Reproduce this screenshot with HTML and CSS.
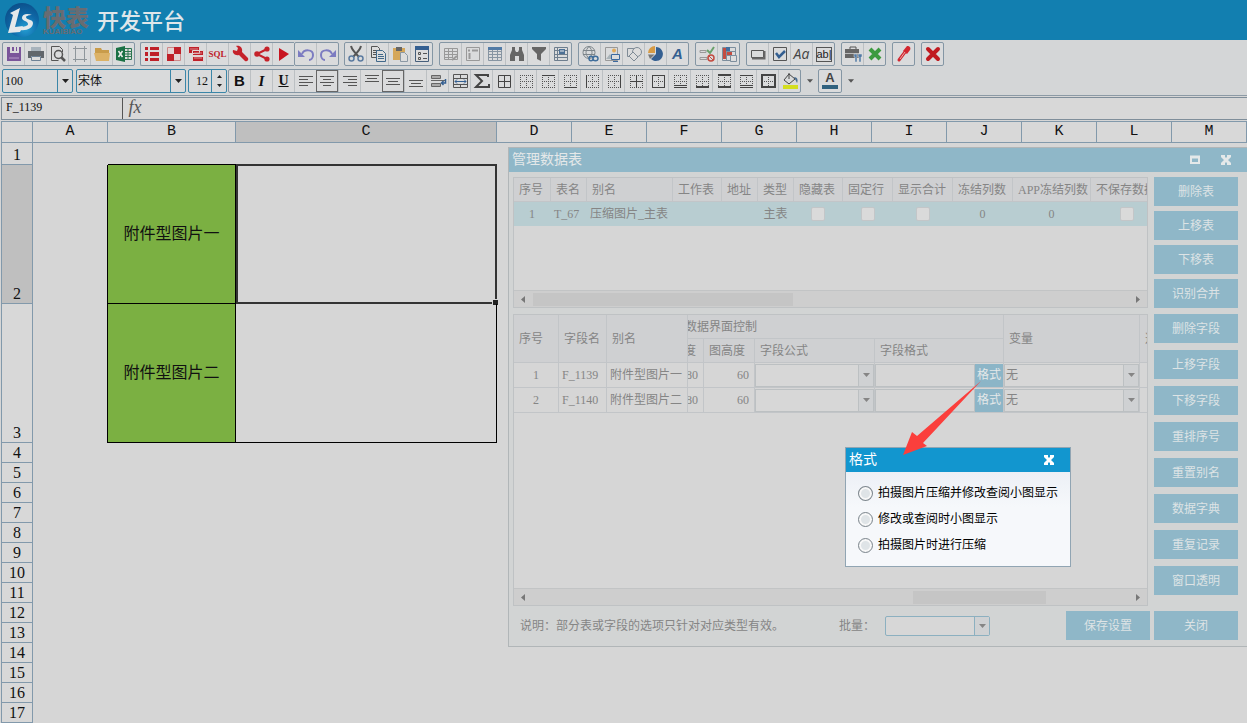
FILE: index.html
```html
<!DOCTYPE html>
<html lang="zh-CN">
<head>
<meta charset="utf-8">
<title>开发平台</title>
<link rel="stylesheet" href="styles.css">
</head>
<body>
<svg class="defs" aria-hidden="true">
  <defs>
    <radialGradient id="ball" cx="0.6" cy="0.75" r="0.8"><stop offset="0" stop-color="#25a0d4"/><stop offset="0.5" stop-color="#0f69a8"/><stop offset="1" stop-color="#0b4d88"/></radialGradient>
    <symbol id="dots" viewBox="0 0 18 18"><path d="M3 3.500h13M3 9.500h13M3 15.500h13M3.500 3v13M9.500 3v13M15.500 3v13" fill="none" stroke="#555" stroke-dasharray="1 1"/></symbol>
    <symbol id="down" viewBox="0 0 7 4"><path d="M0 0h7L3.500 4z" fill="currentColor"/></symbol>
    <symbol id="left" viewBox="0 0 4 7"><path d="M4 0v7L0 3.500z" fill="#777"/></symbol>
    <symbol id="right" viewBox="0 0 4 7"><path d="M0 0v7l4-3.500z" fill="#777"/></symbol>
    <symbol id="cross" viewBox="0 0 12 12"><path d="m2 2 8 8M10 2l-8 8" stroke="currentColor" stroke-width="3"/><path d="M1 1h4v2H1zM7 1h4v2H7zM1 9h4v2H1zM7 9h4v2H7z" fill="currentColor"/></symbol>
  </defs>
</svg>

<header class="brand">
  <svg class="logo" viewBox="0 0 36 36"><circle cx="18" cy="18" r="17" fill="url(#ball)"/><path d="M6 11 16 6l-5 19 8-1-3 6-12 1 5-18z" fill="#e4e8ea"/><path d="M28 13c-5-2-10-1-10 3 0 3 6 3 6 6 0 2-3 2-6 3l-2 3c7 1 13-2 13-7 0-4-7-3-7-6 0-1 3-2 6-2z" fill="#e4e8ea"/></svg>
  <div class="wordmark"><b>快表</b><small>KUAIBIAO</small></div>
  <h1>开发平台</h1>
</header>

<div class="toolbar">
  <div class="tools">
    <div class="group">
      <button aria-label="保存"><svg viewBox="0 0 18 18"><path d="M2 2h3v6h9V2h2v14H2z" fill="#7a559a"/><path d="M7 2h2v4H7zM11 2h1v4h-1z" fill="#7a559a"/><path d="M4 13h10" stroke="#b79bcb"/></svg></button>
      <button aria-label="打印"><svg viewBox="0 0 18 18"><path d="M4 2h10v5H4z" fill="#a8b3bc"/><path d="M1 6h16v7h-3v-2H4v2H1z" fill="#61676c"/><path d="M4.500 11.500h9v4h-9z" fill="#ddd" stroke="#6e8296"/></svg></button>
      <button aria-label="预览"><svg viewBox="0 0 18 18" fill="none" stroke="#555"><path d="M13.500 7V4.500l-3-3h-8v14h7"/><circle cx="9.500" cy="9.500" r="4" stroke-width="1.500"/><path d="m12 12 4 4" stroke-width="2.500"/></svg></button>
      <button aria-label="页面"><svg viewBox="0 0 18 18" fill="none" stroke="#8e969b"><path d="M4.500 1v16M13.500 1v16M2 3.500h14M2 14.500h14"/></svg></button>
      <button aria-label="打开"><svg viewBox="0 0 18 18"><path d="M2 3h6l1 2h7v3H2z" fill="#c99c4a"/><path d="M1 8h16l-1 8H3z" fill="#dcb266"/></svg></button>
      <button aria-label="Excel"><svg viewBox="0 0 18 18"><path d="M9.500 3.500h7v11h-7zM9 6.500h7M9 9h7M9 11.500h7M13 3v12" fill="#ddd" stroke="#2b7650"/><path d="m1 3 9-2v16l-9-2z" fill="#1b7145"/><path d="m3.500 6 4 6m0-6-4 6" stroke="#eee" stroke-width="1.500"/></svg></button>
    </div>
    <div class="group join">
      <button aria-label="列表"><svg viewBox="0 0 18 18" fill="#bf2029"><path d="M2 2h3v3H2zM7 2h9v3H7zM2 7h3v4H2zM7 7h9v4H7zM2 13h3v3H2zM7 13h9v3H7z"/></svg></button>
      <button aria-label="网格"><svg viewBox="0 0 18 18"><path d="M2.500 2.500h13v13h-13z" fill="#e4d4d4" stroke="#c88"/><path d="M9 2h7v7H9zM2 9h7v7H2z" fill="#bf2029"/></svg></button>
      <button aria-label="图层"><svg viewBox="0 0 18 18" fill="#bf2029" stroke="#e2d5d5"><path d="M1.500 1.500h11v7h-11zM5.500 5.500h11v6h-11zM5.500 10.500h11v6h-11z"/><path d="M3 4h8M7 8h8M7 13h8" stroke="#d98a8e"/></svg></button>
      <button class="sql">SQL</button>
      <button aria-label="工具"><svg viewBox="0 0 18 18"><path d="M2 5l4 1 1-3-2-2c4-1 7 2 6 6l6 6c1 2-1 4-3 3L8 10c-4 1-7-2-6-5z" fill="#c5222a"/></svg></button>
      <button aria-label="分享"><svg viewBox="0 0 18 18"><path d="M14 4 4 9l10 5" fill="none" stroke="#c5222a" stroke-width="2"/><g fill="#c5222a"><circle cx="14" cy="4" r="2.600"/><circle cx="4" cy="9" r="2.800"/><circle cx="14" cy="14" r="2.600"/></g></svg></button>
      <button aria-label="运行"><svg viewBox="0 0 18 18"><path d="m4 3 10 6-10 7z" fill="#c81520"/></svg></button>
    </div>
    <div class="group tight">
      <button aria-label="撤销"><svg viewBox="0 0 18 18"><path d="M5 9c2-5 11-5 11 1 0 3-2 5-4 5" fill="none" stroke="#7c7cc1" stroke-width="2"/><path d="M1 5v7h7z" fill="#7c7cc1"/></svg></button>
      <button aria-label="重做"><svg viewBox="0 0 18 18"><path d="M13 9C11 4 2 4 2 10c0 3 2 5 4 5" fill="none" stroke="#7c7cc1" stroke-width="2"/><path d="M17 5v7h-7z" fill="#7c7cc1"/></svg></button>
    </div>
    <div class="group near">
      <button aria-label="剪切"><svg viewBox="0 0 18 18" fill="none"><path d="M4 1c1 4 4 7 8 11M14 1c-1 4-4 7-8 11" stroke="#555" stroke-width="2"/><circle cx="4.500" cy="13.500" r="2.500" stroke="#5b7ba0" stroke-width="1.500"/><circle cx="13.500" cy="13.500" r="2.500" stroke="#5b7ba0" stroke-width="1.500"/></svg></button>
      <button aria-label="复制"><svg viewBox="0 0 18 18" fill="#ddd" stroke="#555"><path d="M2.500 1.500h6l2 2v9h-8zM4 5.500h4M4 7.500h4M4 9.500h4"/><path d="M7.500 5.500h6l3 3v8h-9z" stroke="#41698b"/><path d="M9 9.500h5M9 11.500h6M9 13.500h6" stroke="#41698b"/></svg></button>
      <button aria-label="粘贴"><svg viewBox="0 0 18 18"><path d="M2 3h12v12H2z" fill="#d5a75a"/><path d="M5 2h6v4H5z" fill="#666"/><path d="M9.500 7.500h4l3 3v6h-7z" fill="#ddd" stroke="#8b98a4"/></svg></button>
      <button aria-label="属性"><svg viewBox="0 0 18 18"><path d="M2.500 2.500h13v14h-13z" fill="#ddd" stroke="#465f7b"/><path d="M2 1h14v4H2z" fill="#345f91"/><path d="M5.500 7.500h2v2h-2zM5.500 12.500h2v2h-2z" fill="none" stroke="#555"/><path d="M10 8.500h4M10 13.500h4" stroke="#555"/></svg></button>
    </div>
    <div class="group">
      <button aria-label="表格"><svg viewBox="0 0 18 18" fill="none" stroke="#999"><path d="M2.500 3.500h13v11h-13zM2 6.500h14M2 9.500h14M2 12.500h8M6.500 3v12M10.500 3v10"/><path d="m10 15 5-4" stroke-width="2"/></svg></button>
      <button aria-label="冻结"><svg viewBox="0 0 18 18" fill="none" stroke="#999"><path d="M2.500 2.500h13v13h-13z"/><path d="M8 5.500h6M5.500 8v6M4 5.500h2" stroke-width="2"/></svg></button>
      <button aria-label="数据表"><svg viewBox="0 0 18 18"><path d="M2.500 2.500h13v13h-13zM2 6.500h14M2 9.500h14M2 12.500h14M6.500 3v13M11.500 3v13" fill="none" stroke="#8795a2"/><path d="M2 2h14v3H2z" fill="#527ba6"/></svg></button>
      <button aria-label="查找"><svg viewBox="0 0 18 18" fill="#666"><path d="M4 2h3v3l1 2h2l1-2V2h3v3l2 5v6h-5v-5H7v5H2v-6l2-5z"/></svg></button>
      <button aria-label="筛选"><svg viewBox="0 0 18 18" fill="#666"><path d="M2 2h14v2l-5 5v7l-4-2V9L2 4z"/></svg></button>
      <button aria-label="表单"><svg viewBox="0 0 18 18" fill="none" stroke="#6e7e8e"><path d="M2.500 2.500h13v13h-13zM2 5.500h14M2 9.500h14M2 12.500h14M5.500 2v13"/><path d="M7 4h6v5H7z" fill="#4d7196" stroke="none"/><path d="M8 6h4" stroke="#eee"/></svg></button>
    </div>
    <div class="group">
      <button aria-label="链接"><svg viewBox="0 0 18 18" fill="none" stroke="#7d858a"><circle cx="8" cy="7.500" r="6"/><path d="M2 5.500h12M2 9.500h12M8 1.500c-4 4-4 8 0 12M8 1.500c4 4 4 8 0 12"/><path d="M8 13.500c0-3 4-3 4 0s-4 3-4 0M12 13.500c0-3 5-3 5 0s-5 3-5 0" stroke="#416f9c" stroke-width="1.500"/></svg></button>
      <button aria-label="图片"><svg viewBox="0 0 18 18" fill="none"><path d="M2.500 2.500h12v13h-12z" stroke="#999"/><path d="m3 14 4-5 4 5z" fill="#a9b3b8"/><circle cx="11" cy="5.500" r="2" fill="#e2aa59"/><path d="M8.500 9.500h8v5h-8zM10 16.500h5" fill="#ddd" stroke="#3c6aa0"/></svg></button>
      <button aria-label="形状"><svg viewBox="0 0 18 18" fill="none" stroke="#7f8b96"><path d="M2.500 3.500h8v8h-8z"/><circle cx="12" cy="7" r="4.500" fill="#ddd"/><path d="m8 7 5 5-4 4-5-5z" fill="#ddd"/></svg></button>
      <button aria-label="图表"><svg viewBox="0 0 18 18"><path d="M9 2a7 7 0 1 1-5 12l5-5z" fill="#345f91"/><path d="M8 1v7H1a7 7 0 0 1 7-7" fill="#d79b45"/><path d="M1 9.500h6.500L3 14z" fill="#777"/></svg></button>
      <button class="art">A</button>
    </div>
    <div class="group">
      <button aria-label="校验"><svg viewBox="0 0 18 18" fill="none"><path d="M2 5.500h6v2H2zM2 12.500h7v2H2z" stroke="#999"/><path d="m9 5 3 3 4-6" stroke="#69a06b" stroke-width="2"/><circle cx="13" cy="13" r="3" stroke="#c34b40" stroke-width="1.500"/><path d="m11 11 4 4" stroke="#c34b40"/></svg></button>
      <button aria-label="条件格式"><svg viewBox="0 0 18 18" fill="none" stroke="#7d8e9d"><path d="M2.500 2.500h13v13h-13zM2 6.500h14M2 10.500h14M6.500 2v14"/><path d="M3 3h3v11H3zM7 7h5v3H7z" fill="#c34b40" stroke="none"/><path d="M6 2h4v4H6z" fill="#416fa0" stroke="none"/><path d="M10.500 10.500h6v6h-6z" fill="#ddd"/></svg></button>
    </div>
    <div class="group">
      <button aria-label="按钮控件"><svg viewBox="0 0 18 18"><path d="M2.500 5.500h12v7h-12z" fill="none" stroke="#555"/><path d="M3 13.500h12.500V6" fill="none" stroke="#666" stroke-width="2"/></svg></button>
      <button aria-label="复选控件"><svg viewBox="0 0 18 18" fill="none"><path d="M2.500 2.500h13v13h-13z" stroke="#555"/><path d="m5 8 3 4 6-6" stroke="#345f91" stroke-width="2.500"/></svg></button>
      <button class="aa">Aa</button>
      <button class="abl"><span>ab|</span></button>
    </div>
    <div class="group">
      <button aria-label="工具箱"><svg viewBox="0 0 18 18"><path d="M6 4V2h6v2" fill="none" stroke="#555"/><path d="M1 4h14v9H1z" fill="#666"/><path d="M1 8.500h14" stroke="#bbb"/><path d="M10 9h3v8h-2v-5h-1zM14 9h4v3h-1v5h-2v-5h-1z" fill="#527ba6" stroke="#ddd" stroke-width=".5"/></svg></button>
      <button aria-label="取消"><svg viewBox="0 0 18 18"><path d="m4 4 10 10M14 4 4 14" stroke="#3c9a3f" stroke-width="4"/></svg></button>
    </div>
    <div class="group">
      <button aria-label="画笔"><svg viewBox="0 0 18 18"><path d="M12 1c3 0 4 2 3 4l-3 4-4-3z" fill="#d22730"/><path d="m10 7-6 8" stroke="#d22730" stroke-width="3" stroke-linecap="round"/><path d="m10 7-5 7" stroke="#e9a9a9"/></svg></button>
    </div>
    <div class="group">
      <button aria-label="关闭设计"><svg viewBox="0 0 18 18"><path d="m4 4 10 10M14 4 4 14" stroke="#c01a20" stroke-width="4" stroke-linecap="round"/></svg></button>
    </div>
  </div>

  <div class="tools">
    <label class="combo zoom"><select aria-label="缩放"><option>100</option></select><i><svg><use href="#down"/></svg></i></label>
    <label class="combo font"><select aria-label="字体"><option>宋体</option></select><i><svg><use href="#down"/></svg></i></label>
    <label class="combo size"><input aria-label="字号" value="12"><i><svg class="up"><use href="#down"/></svg><svg><use href="#down"/></svg></i></label>
    <div class="group wide">
      <button class="bold">B</button>
      <button class="ital">I</button>
      <button class="under">U</button>
      <button aria-label="左对齐"><svg viewBox="0 0 18 18" stroke="#555"><path d="M2 4.500h14M2 7.500h9M2 10.500h14M2 13.500h9"/></svg></button>
      <button class="on" aria-label="居中"><svg viewBox="0 0 18 18" stroke="#555"><path d="M2 4.500h14M5 7.500h8M2 10.500h14M5 13.500h8"/></svg></button>
      <button aria-label="右对齐"><svg viewBox="0 0 18 18" stroke="#555"><path d="M2 4.500h14M7 7.500h9M2 10.500h14M7 13.500h9"/></svg></button>
      <button aria-label="顶端"><svg viewBox="0 0 18 18" stroke="#555"><path d="M2 3.500h14M4 6.500h10M2 9.500h14"/></svg></button>
      <button class="on" aria-label="垂直居中"><svg viewBox="0 0 18 18" stroke="#555"><path d="M2 6.500h14M4 9.500h10M2 12.500h14"/></svg></button>
      <button aria-label="底端"><svg viewBox="0 0 18 18" stroke="#555"><path d="M2 8.500h14M4 11.500h10M2 14.500h14"/></svg></button>
      <button aria-label="换行"><svg viewBox="0 0 18 18" fill="none" stroke="#666"><path d="M2.500 3.500h9v3h-9zM2.500 11.500h9v3h-9z" fill="#aaa"/><path d="M2 8.500h14"/><path d="M16.500 7v4h-4m2-2-2 2 2 2" stroke="#345f91" stroke-width="1.500"/></svg></button>
      <button aria-label="合并"><svg viewBox="0 0 18 18" fill="none" stroke="#555"><path d="M2.500 2.500h14v13h-14zM2 6.500h14M2 12.500h14M9.500 2v4M9.500 12v4"/><path d="M4 9.500h11M6 7.500l-2 2 2 2m7-4 2 2-2 2" stroke="#345f91"/></svg></button>
      <button aria-label="求和"><svg viewBox="0 0 18 18"><path d="M15 5V3H3l6 6-6 6h13v-3" fill="none" stroke="#444" stroke-width="2"/></svg></button>
      <button aria-label="所有框线"><svg viewBox="0 0 18 18"><path d="M3.500 3.500h12v12h-12zM3 9.500h12M9.500 3v12" fill="none" stroke="#444"/></svg></button>
      <button aria-label="无框线"><svg><use href="#dots"/></svg></button>
      <button aria-label="上框线"><svg viewBox="0 0 18 18"><use href="#dots"/><path d="M3 3.500h13" stroke="#444"/></svg></button>
      <button aria-label="下框线"><svg viewBox="0 0 18 18"><use href="#dots"/><path d="M3 15.500h13" stroke="#444"/></svg></button>
      <button aria-label="左框线"><svg viewBox="0 0 18 18"><use href="#dots"/><path d="M3.500 3v13" stroke="#444"/></svg></button>
      <button aria-label="右框线"><svg viewBox="0 0 18 18"><use href="#dots"/><path d="M15.500 3v13" stroke="#444"/></svg></button>
      <button aria-label="内框线"><svg viewBox="0 0 18 18"><use href="#dots"/><path d="M3 9.500h13M9.500 3v13" stroke="#444"/></svg></button>
      <button aria-label="外框线"><svg viewBox="0 0 18 18"><use href="#dots"/><path d="M3.500 3.500h12v12h-12z" fill="none" stroke="#444"/></svg></button>
      <button aria-label="双底框线"><svg viewBox="0 0 18 18"><use href="#dots"/><path d="M3 13.500h13M3 15.500h13" stroke="#444"/></svg></button>
      <button aria-label="粗底框线"><svg viewBox="0 0 18 18"><use href="#dots"/><path d="M3 15h13" stroke="#444" stroke-width="2"/></svg></button>
      <button aria-label="粗上下框线"><svg viewBox="0 0 18 18"><use href="#dots"/><path d="M3 3h13M3 15h13" stroke="#444" stroke-width="2"/></svg></button>
      <button aria-label="上下双框线"><svg viewBox="0 0 18 18"><use href="#dots"/><path d="M3 3.500h13M3 13.500h13M3 15.500h13" stroke="#444"/></svg></button>
      <button aria-label="粗外框线"><svg viewBox="0 0 18 18"><use href="#dots"/><path d="M3 3h13v12H3z" fill="none" stroke="#444" stroke-width="2"/></svg></button>
      <button aria-label="填充颜色"><svg viewBox="0 0 18 18"><path d="m8 2 6 5-6 5-5-4zM8 1v6" fill="none" stroke="#444"/><path d="M13 5c4 0 4 4 3 6z" fill="#4a6e91"/><path d="M2 13h15v4H2z" fill="#d4de20"/></svg></button>
    </div>
    <button class="drop" aria-label="更多填充色"><svg><use href="#down"/></svg></button>
    <div class="group tight"><button class="ink">A</button></div>
    <button class="drop" aria-label="更多字体色"><svg><use href="#down"/></svg></button>
  </div>
</div>

<div class="formula">
  <input class="name" aria-label="单元格名称" value="F_1139">
  <span class="fx">fx</span>
  <input class="expr" aria-label="公式">
</div>

<main class="workspace">
  <table class="sheet">
    <colgroup><col class="n"><col class="s"><col class="b"><col class="c"><col span="10"></colgroup>
    <thead><tr><th></th><th>A</th><th>B</th><th class="sel">C</th><th>D</th><th>E</th><th>F</th><th>G</th><th>H</th><th>I</th><th>J</th><th>K</th><th>L</th><th>M</th></tr></thead>
    <tbody>
      <tr class="first"><th>1</th><td></td><td class="edge"></td><td class="edge"></td><td colspan="10"></td></tr>
      <tr class="tall"><th class="sel">2</th><td class="side"></td><td class="green">附件型图片一</td><td class="box"><div class="cursor"></div></td><td colspan="10"></td></tr>
      <tr class="tall"><th>3</th><td class="side"></td><td class="green">附件型图片二</td><td class="box"></td><td colspan="10"></td></tr>
      <tr><th>4</th><td colspan="13"></td></tr>
      <tr><th>5</th><td colspan="13"></td></tr>
      <tr><th>6</th><td colspan="13"></td></tr>
      <tr><th>7</th><td colspan="13"></td></tr>
      <tr><th>8</th><td colspan="13"></td></tr>
      <tr><th>9</th><td colspan="13"></td></tr>
      <tr><th>10</th><td colspan="13"></td></tr>
      <tr><th>11</th><td colspan="13"></td></tr>
      <tr><th>12</th><td colspan="13"></td></tr>
      <tr><th>13</th><td colspan="13"></td></tr>
      <tr><th>14</th><td colspan="13"></td></tr>
      <tr><th>15</th><td colspan="13"></td></tr>
      <tr><th>16</th><td colspan="13"></td></tr>
      <tr><th>17</th><td colspan="13"></td></tr>
    </tbody>
  </table>

  <section class="window">
    <div class="titlebar"><h2>管理数据表</h2><button aria-label="最大化"><svg viewBox="0 0 12 12"><path d="M2 3h8v6H2z" fill="none" stroke="currentColor" stroke-width="2"/><path d="M1 3h10" stroke="currentColor" stroke-width="3"/></svg></button><button aria-label="关闭窗口"><svg><use href="#cross"/></svg></button></div>
    <div class="part">
      <div class="frame">
        <div class="clip">
          <table class="data tables">
            <colgroup><col class="w37"><col class="w36"><col class="w86"><col class="w49"><col class="w36"><col class="w36"><col class="w49"><col class="w50"><col class="w60"><col class="w60"><col class="w78"><col class="w73"></colgroup>
            <thead><tr><th>序号</th><th>表名</th><th>别名</th><th>工作表</th><th>地址</th><th>类型</th><th>隐藏表</th><th>固定行</th><th>显示合计</th><th>冻结列数</th><th>APP冻结列数</th><th>不保存数据</th></tr></thead>
            <tbody><tr><td class="mid">1</td><td>T_67</td><td>压缩图片_主表</td><td></td><td></td><td class="mid">主表</td><td class="mid"><input type="checkbox" aria-label="隐藏表"></td><td class="mid"><input type="checkbox" aria-label="固定行"></td><td class="mid"><input type="checkbox" aria-label="显示合计"></td><td class="mid">0</td><td class="mid">0</td><td class="mid"><input type="checkbox" aria-label="不保存数据"></td></tr></tbody>
          </table>
        </div>
        <div class="scroll first-scroll"><svg><use href="#left"/></svg><div></div><svg><use href="#right"/></svg></div>
      </div>
      <div class="actions close"><button>删除表</button><button>上移表</button><button>下移表</button><button>识别合并</button></div>
    </div>
    <div class="part">
      <div class="frame">
        <div class="panes">
          <table class="data fields fixed">
            <colgroup><col class="w45"><col class="w48"><col class="w81"></colgroup>
            <thead><tr class="double"><th>序号</th><th>字段名</th><th>别名</th></tr></thead>
            <tbody><tr><td class="mid">1</td><td>F_1139</td><td>附件型图片一</td></tr><tr><td class="mid">2</td><td>F_1140</td><td>附件型图片二</td></tr></tbody>
          </table>
          <div class="clip">
            <table class="data fields moved">
              <colgroup><col class="w49"><col class="w51"><col class="w120"><col class="w129"><col class="w136"><col class="w60"></colgroup>
              <thead>
                <tr><th class="over" colspan="4">数据界面控制</th><th rowspan="2">变量</th><th rowspan="2">选项</th></tr>
                <tr><th>图宽度</th><th>图高度</th><th>字段公式</th><th>字段格式</th></tr>
              </thead>
              <tbody>
                <tr><td class="num">80</td><td class="num">60</td><td class="ctl"><label class="pick"><select aria-label="字段公式一"><option></option></select><i><svg><use href="#down"/></svg></i></label></td><td class="ctl"><div class="format"><input aria-label="字段格式一"><button>格式</button></div></td><td class="ctl"><label class="pick"><select aria-label="变量一"><option>无</option></select><i><svg><use href="#down"/></svg></i></label></td><td></td></tr>
                <tr><td class="num">80</td><td class="num">60</td><td class="ctl"><label class="pick"><select aria-label="字段公式二"><option></option></select><i><svg><use href="#down"/></svg></i></label></td><td class="ctl"><div class="format"><input aria-label="字段格式二"><button>格式</button></div></td><td class="ctl"><label class="pick"><select aria-label="变量二"><option>无</option></select><i><svg><use href="#down"/></svg></i></label></td><td></td></tr>
              </tbody>
            </table>
          </div>
        </div>
        <div class="scroll last-scroll"><svg><use href="#left"/></svg><div></div><svg><use href="#right"/></svg></div>
      </div>
      <div class="actions"><button>删除字段</button><button>上移字段</button><button>下移字段</button><button>重排序号</button><button>重置别名</button><button>数据字典</button><button>重复记录</button><button>窗口透明</button></div>
    </div>
    <footer class="foot">
      <p>说明：部分表或字段的选项只针对对应类型有效。</p>
      <label for="batch">批量：</label>
      <span class="pick batch"><select id="batch"><option></option></select><i><svg><use href="#down"/></svg></i></span>
      <div class="confirm"><button>保存设置</button><button>关闭</button></div>
    </footer>

    <form class="popup">
      <div class="titlebar"><h2>格式</h2><button type="button" aria-label="关闭"><svg><use href="#cross"/></svg></button></div>
      <div class="choices">
        <label><input type="radio" name="format">拍摄图片压缩并修改查阅小图显示</label>
        <label><input type="radio" name="format">修改或查阅时小图显示</label>
        <label><input type="radio" name="format">拍摄图片时进行压缩</label>
      </div>
    </form>
    <svg class="arrow" viewBox="0 0 80 76"><path d="M78 1 20 63l4 3-24 9 9-23 5 4z" fill="#fb3f3c"/></svg>
  </section>
</main>
</body>
</html>
```

FILE: styles.css
```css
* { box-sizing: border-box; }
body {
  margin: 0;
  height: 100vh;
  display: flex;
  flex-direction: column;
  overflow: hidden;
  background: #d6d6d6;
  color: #111;
  font: 12px/16px "Liberation Serif", "Noto Sans CJK SC", serif;
}
h1, h2, p { margin: 0; font-weight: normal; }
button, input, select { font: inherit; color: inherit; margin: 0; padding: 0; border: 0; background: none; border-radius: 0; outline: 0; }
select { appearance: none; }
.defs { position: absolute; width: 0; height: 0; }

/* Brand bar */
.brand { flex: none; height: 40px; display: flex; align-items: center; padding-left: 4px; background: #127fb0; }
.logo { width: 36px; height: 36px; }
.wordmark { display: flex; flex-direction: column; margin-left: 3px; width: 48px; color: #686c72; font-family: "Noto Sans CJK SC", sans-serif; }
.wordmark b { font-size: 23px; line-height: 24px; font-weight: 900; }
.wordmark small { font: bold 8px/8px "Liberation Sans", sans-serif; }
.brand h1 { margin-left: 6px; padding-bottom: 3px; color: #dfe6ea; font: 500 22px/32px "Noto Sans CJK SC", sans-serif; }

/* Toolbars */
.toolbar { flex: none; display: flex; flex-direction: column; gap: 3px; padding: 2px 0 2px 2px; border-bottom: 1px solid #8c9aa5; background: #d4d6d7; }
.tools { display: flex; height: 24px; }
.group { display: flex; flex: none; margin-left: 6px; border: 1px solid #8496a4; border-radius: 2px; background: #dadbdc; }
.group:first-child { margin-left: 0; }
.group.join { margin-left: 5px; border-right: 0; border-radius: 2px 0 0 2px; }
.group.near { margin-left: 5px; }
.group.tight { margin-left: 0; }
.group.wide { margin-left: 1px; }
.group button { width: 22px; display: grid; place-items: center; border-left: 1px solid #bcc0c3; }
.group button:first-child { width: 21px; border-left: 0; }
.group svg { width: 18px; height: 18px; }
.group .sql { color: #bf2029; font: bold 9px/16px "Liberation Serif", serif; }
.group .art { color: #345f91; font: italic 900 15px/18px "Liberation Sans", sans-serif; }
.group .aa { color: #444; font: italic 14px/18px "Open Sans", sans-serif; }
.group .abl { color: #222; font: 11px/14px "Liberation Sans", sans-serif; }
.abl span { width: 16px; height: 15px; line-height: 12px; border: 1px solid #555; text-align: center; }
.group .bold { font: bold 15px/20px "Liberation Sans", sans-serif; }
.group .ital { font: italic bold 15px/20px "Liberation Serif", serif; }
.group .under { font: bold 14px/20px "Liberation Serif", serif; text-decoration: underline; }
.group .on { border: 1px solid #666; }
.group .ink { color: #444; font: bold 13px/14px "Liberation Sans", sans-serif; background: linear-gradient(#31627f, #31627f) center 15px / 16px 4px no-repeat; padding-bottom: 6px; width: 22px; }
.group .ink:first-child { width: 22px; }
.drop { width: 17px; display: grid; place-items: center; color: #555; }
.drop svg { width: 6px; height: 4px; }
.combo { display: flex; border: 1px solid #3b86a8; border-radius: 2px; background: #d9dadb; }
.combo select, .combo input { flex: 1; min-width: 0; padding-left: 2px; }
.combo i { width: 15px; display: flex; flex-direction: column; align-items: center; justify-content: center; gap: 6px; border-left: 1px solid #3b86a8; color: #222; }
.combo svg { width: 7px; height: 4px; }
.combo .up { transform: rotate(180deg); }
.zoom { width: 71px; margin-right: 3px; }
.font { width: 110px; margin-right: 2px; }
.font select { padding-left: 1px; }
.size { width: 39px; }
.size input { text-align: right; padding-right: 3px; }
.size svg { width: 5px; height: 3px; }

/* Formula bar */
.formula { flex: none; display: flex; height: 23px; margin: 1px 0 1px 1px; border: 1px solid #7f8e9a; border-right: 0; background: #d8d8d8; }
.formula .name { width: 121px; padding: 0 0 3px 4px; border-right: 1px solid #555; }
.formula .fx { width: 24px; text-align: center; color: #555; font: italic 18px/19px "Liberation Serif", serif; }
.formula .expr { flex: 1; }

/* Spreadsheet */
.workspace { position: relative; flex: 1; min-height: 0; }
.sheet { width: 100%; padding-left: 1px; table-layout: fixed; border-spacing: 0; font-size: 16px; line-height: 18px; }
.sheet .n { width: 32px; }
.sheet .s { width: 75px; }
.sheet .b { width: 128px; }
.sheet .c { width: 261px; }
.sheet tr { height: 20px; }
.sheet thead tr, .sheet .first { height: 22px; }
.sheet .tall { height: 139px; }
.sheet th, .sheet td { padding: 0; }
.sheet th { font-weight: normal; border: solid #8299ab; border-width: 0 1px 1px 0; background: #d8d8d8; }
.sheet thead th { border-top-width: 1px; font: 15px/18px "Liberation Mono", monospace; }
.sheet th:first-child { border-left-width: 1px; }
.sheet tbody th { vertical-align: bottom; }
.sheet .sel { background: #bfbfbf; }
.sheet .edge { border-bottom: 1px solid #000; }
.sheet .side { border-right: 1px solid #000; }
.sheet .green, .sheet .box { border: solid #000; border-width: 0 1px 1px 0; }
.sheet .green { background: #7bb042; text-align: center; }
.sheet .box { position: relative; }
.cursor { position: absolute; inset: -1px -1px -1px 0; border: 2px solid #333; }
.cursor::after { content: ""; position: absolute; right: -3px; bottom: -3px; width: 5px; height: 5px; background: #222; border: solid #d6d6d6; border-width: 1px 0 0 1px; }

/* Data table window */
.window { position: absolute; left: 508px; right: 0; top: 26px; padding-bottom: 6px; border: 1px solid #b1b6b8; border-right: 0; background: #d2d4d4; color: #858585; }
.titlebar { display: flex; align-items: center; height: 24px; padding-left: 3px; background: #8fb7c8; color: #e4e8e9; }
.titlebar h2 { flex: 1; font-size: 14px; line-height: 22px; }
.titlebar button { width: 12px; height: 12px; margin-right: 19px; }
.titlebar button:last-child { margin-right: 15px; }
.titlebar svg { display: block; width: 12px; height: 12px; }
.part { display: flex; gap: 6px; padding: 5px 9px 0 4px; }
.part + .part { padding-top: 6px; }
.frame { flex: 1; min-width: 0; display: flex; flex-direction: column; border: 1px solid #bfc2c4; background: #d6d6d6; }
.clip { flex: 1; min-width: 0; overflow: hidden; }
.panes { flex: 1; display: flex; align-items: flex-start; }
.data { table-layout: fixed; border-spacing: 0; }
.tables { width: 650px; }
.fixed { flex: none; width: 174px; }
.moved { width: 545px; margin-left: -33px; }
.w36 { width: 36px; } .w37 { width: 37px; } .w45 { width: 45px; } .w48 { width: 48px; }
.w49 { width: 49px; } .w50 { width: 50px; } .w51 { width: 51px; } .w60 { width: 60px; }
.w73 { width: 73px; } .w78 { width: 78px; } .w81 { width: 81px; } .w86 { width: 86px; }
.w120 { width: 120px; } .w129 { width: 129px; } .w136 { width: 136px; }
.data tr { height: 24px; }
.data th, .data td { padding: 0 0 0 3px; white-space: nowrap; border: solid #c2c5c8; border-width: 0 1px 1px 0; }
.data th { padding-left: 5px; text-align: left; font-weight: normal; background: #cfd0d2; }
.data .over { padding-left: 30px; }
.data .mid { padding: 0; text-align: center; }
.data .num { padding: 0 5px 0 0; text-align: right; }
.tables td { background: #b8cdd1; border-color: #b8cdd1; }
.fields .double { height: 48px; }
.fields tbody tr { height: 25px; }
.data .ctl { padding: 0; }
input[type="checkbox"] { appearance: none; display: block; width: 14px; height: 14px; margin: 0 auto; border: 1px solid #c3c6c8; border-radius: 2px; background: #dadada; }
.pick { display: flex; height: 23px; border: 1px solid #bcc0c2; background: #d7d7d7; }
.pick select { flex: 1; min-width: 0; padding-left: 1px; }
.pick i { width: 15px; display: grid; place-items: center; border-left: 1px solid #bcc0c2; background: #cfd1d3; }
.pick svg { width: 7px; height: 4px; }
.format { display: flex; height: 23px; }
.format input { flex: 1; min-width: 0; border: 1px solid #bcc0c2; }
.format button { width: 28px; background: #8cb5c7; color: #e4e8e9; }
.scroll { display: flex; align-items: center; height: 17px; padding: 0 7px; border-top: 1px solid #c2c4c5; background: #cecece; }
.scroll svg { flex: none; width: 4px; height: 7px; }
.scroll div { height: 13px; background: #c5c5c5; }
.first-scroll div { width: 42%; margin: 0 auto 0 8px; }
.last-scroll div { width: 133px; margin: 0 90px 0 auto; }
.actions { flex: none; width: 84px; display: flex; flex-direction: column; gap: 7px; }
.actions.close { gap: 5px; }
.actions button, .confirm button { height: 29px; width: 84px; background: #8fb7c8; color: #dde3e5; }
.part .actions:not(.close) { padding-bottom: 11px; }
.foot { display: flex; align-items: center; padding: 5px 9px 0 11px; }
.foot p { width: 319px; }
.foot label { width: 46px; }
.batch { width: 105px; height: 20px; border-color: #8cb0c0; border-radius: 2px; }
.batch i { border-color: #8cb0c0; }
.confirm { display: flex; gap: 4px; margin-left: auto; }

/* Format popup */
.popup { position: absolute; left: 336px; top: 299px; width: 226px; border: 1px solid #91a5b3; background: linear-gradient(#e5eaf2, #f6f8fb 50%); color: #000; }
.popup .titlebar { background: #1296cf; color: #fff; }
.choices { display: flex; flex-direction: column; gap: 10px; padding: 13px 12px; }
.choices label { display: flex; align-items: center; gap: 5px; height: 16px; white-space: nowrap; }
input[type="radio"] { appearance: none; width: 15px; height: 15px; border: 1px solid #7e878e; border-radius: 50%; background: #dfe4e7; box-shadow: inset 0 0 0 2px #f8f8f8; }
.arrow { position: absolute; left: 394px; top: 232px; width: 80px; height: 76px; }
```
